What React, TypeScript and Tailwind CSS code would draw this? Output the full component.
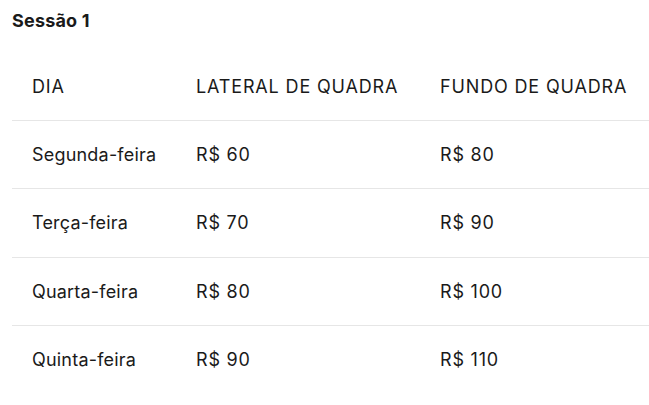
import React from "react";

const rows = [
  { c: ["Segunda-feira", "R$ 60", "R$ 80"], h: "h-[68px]" },
  { c: ["Terça-feira", "R$ 70", "R$ 90"], h: "h-[69px]" },
  { c: ["Quarta-feira", "R$ 80", "R$ 100"], h: "h-[68px]" },
  { c: ["Quinta-feira", "R$ 90", "R$ 110"], h: "h-[69px]" },
];

export default function App() {
  return (
    <div className="w-[649px] h-[405px] bg-white overflow-hidden text-[#1a1a1a]" style={{ fontFamily: "Inter, 'Noto Sans', sans-serif" }}>
      <div className="pl-3 pt-[8px]">
        <h2 className="text-[18px] font-bold leading-[26px] tracking-[0.2px]">Sessão 1</h2>
        <div className="mt-[19px] w-[660px]">
          <div className="flex h-[67px] items-center text-[18px] leading-[24px] tracking-[0.85px]">
            <div className="w-[164px] pl-5">DIA</div>
            <div className="w-[244px] pl-5">LATERAL DE QUADRA</div>
            <div className="pl-5">FUNDO DE QUADRA</div>
          </div>
          {rows.map((r, i) => (
            <div key={i} className={`flex ${r.h} items-center border-t border-[#e6e6e6] text-[18px] leading-[24px]`}>
              <div className="w-[164px] pl-5 tracking-[0.2px]">{r.c[0]}</div>
              <div className="w-[244px] pl-5 tracking-[0.8px]">{r.c[1]}</div>
              <div className="pl-5 tracking-[0.8px]">{r.c[2]}</div>
            </div>
          ))}
        </div>
      </div>
    </div>
  );
}
